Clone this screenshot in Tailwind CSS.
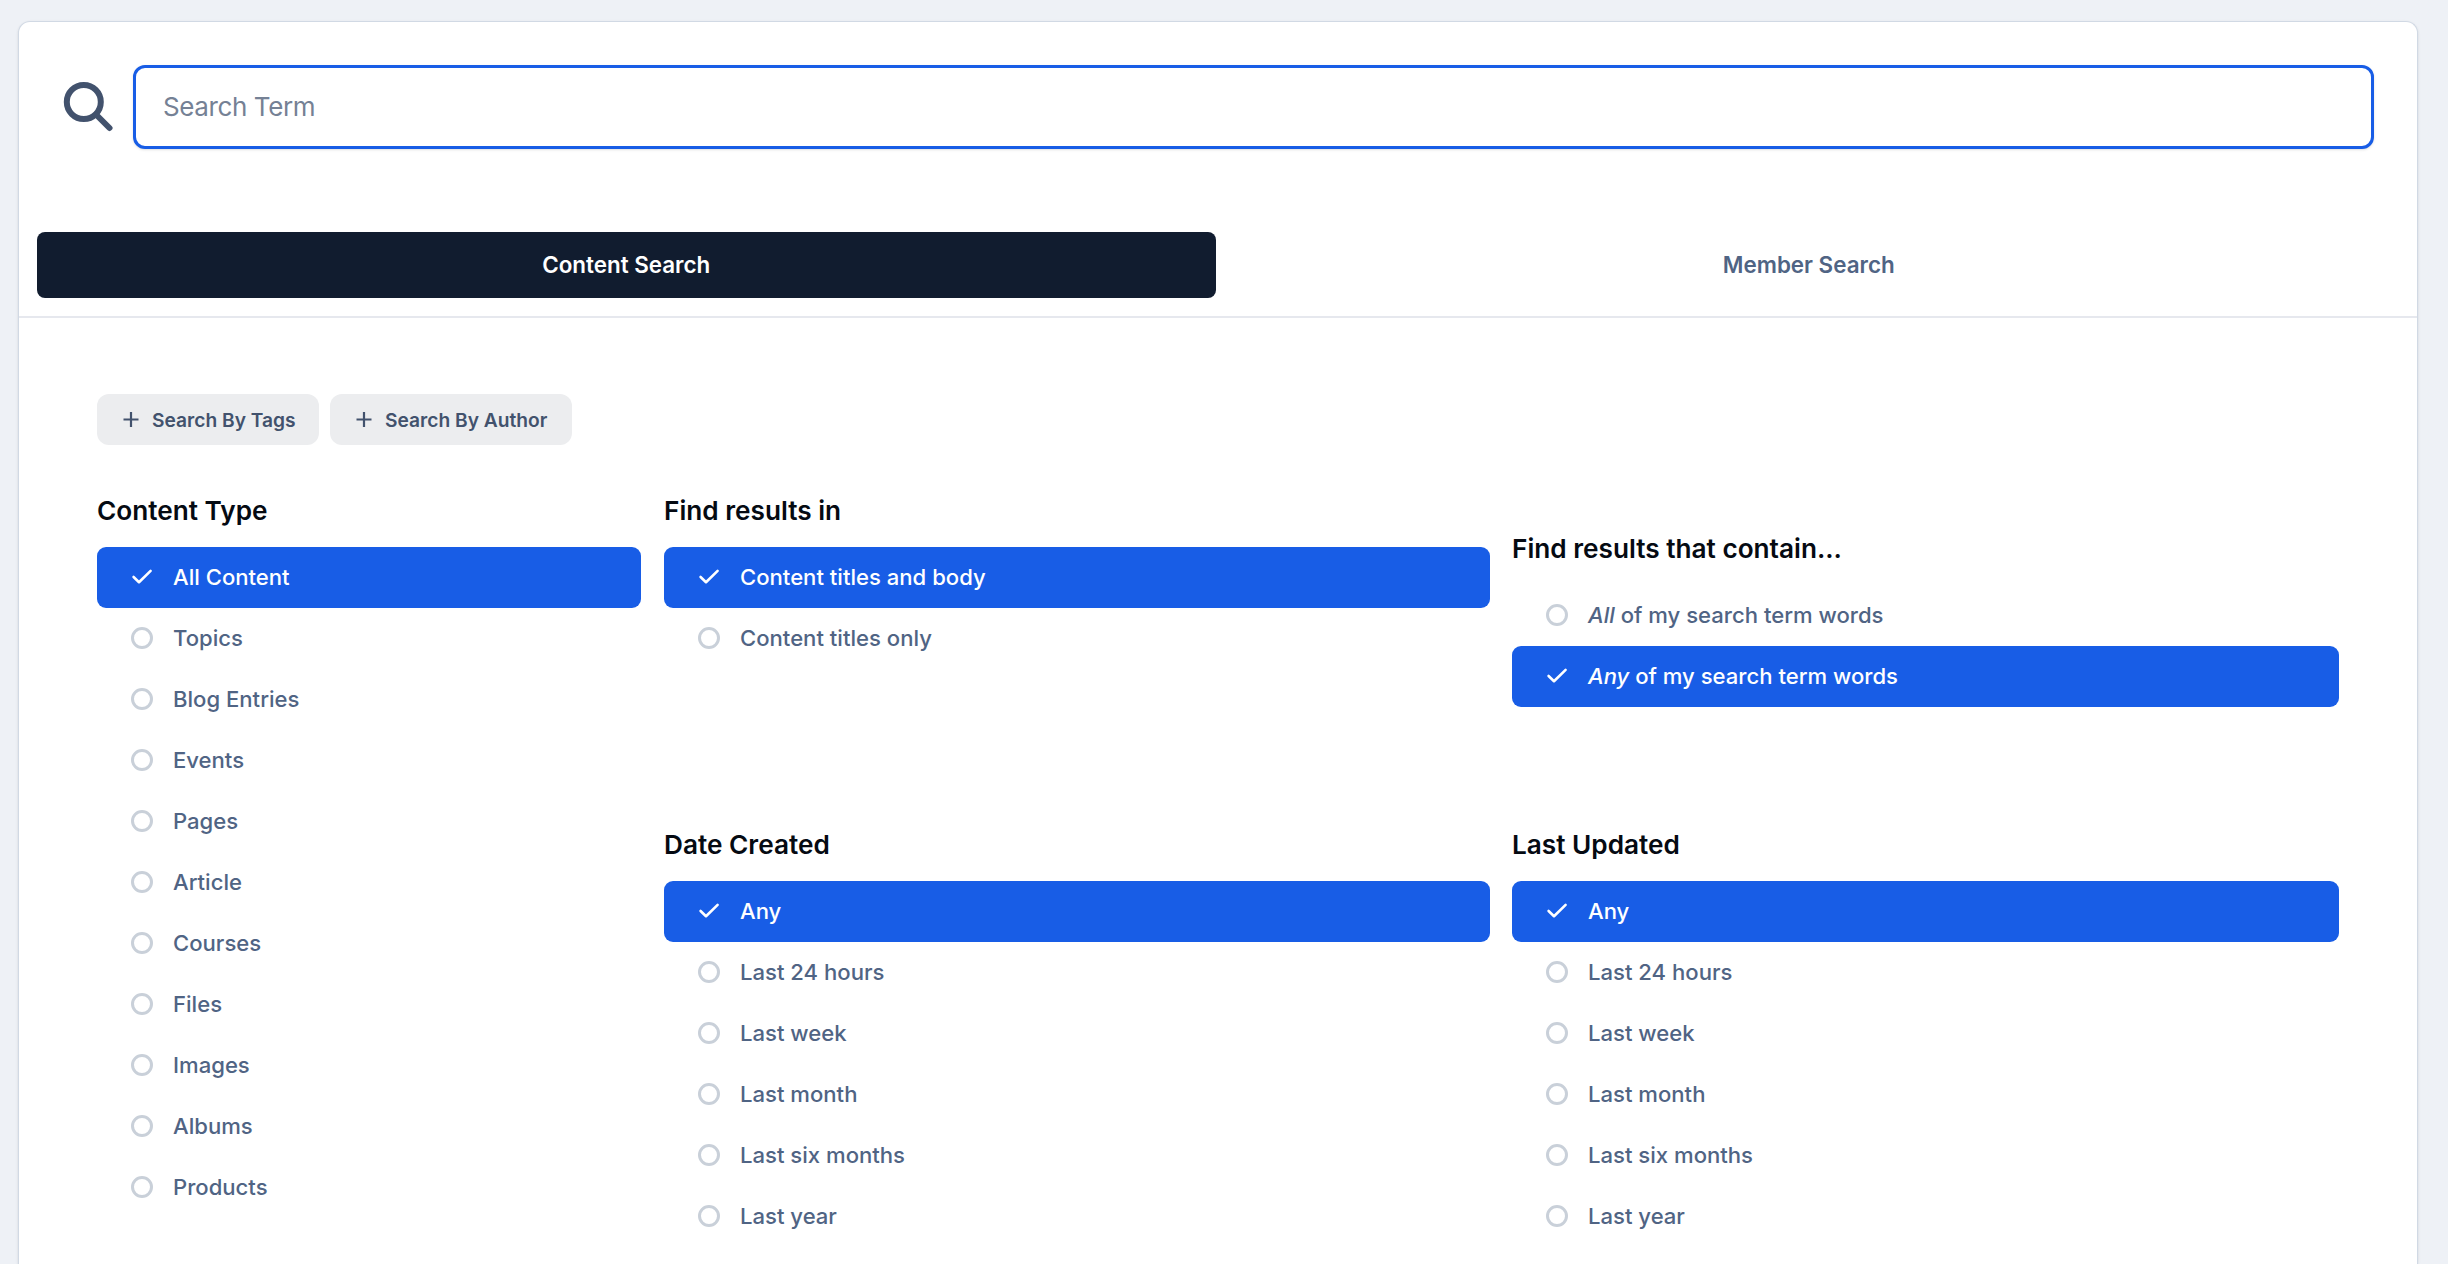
<!DOCTYPE html>
<html lang="en">
<head>
  <meta charset="UTF-8">
  <meta name="viewport" content="width=device-width, initial-scale=1.0">
  <title>Search</title>
  <script src="https://cdn.jsdelivr.net/npm/@tailwindcss/browser@4"></script>
</head>
<body class="h-screen overflow-hidden bg-[#eef1f6] pt-[21px] pl-[18px] pr-[30px] font-['Inter',sans-serif] antialiased">
  <main class="h-full bg-white border border-b-0 border-[#d1d9e4] rounded-t-xl shadow-sm">

    <!-- Search box -->
    <form class="flex items-center h-[84px] mt-[43px] ml-[44px] mr-[43px]" onsubmit="return false">
      <svg class="w-[50px] h-[50px] shrink-0 mr-[20px]" viewBox="0 0 50 50" fill="none" stroke="#42526d">
        <circle cx="20.8" cy="20" r="17" stroke-width="6"/>
        <path d="M33 32.5l13.5 13.5" stroke-width="6" stroke-linecap="round"/>
      </svg>
      <input type="text" placeholder="Search Term"
        class="grow h-[84px] pl-[27px] pr-7 pb-0.5 text-[26px] tracking-[-0.4px] bg-white border-3 border-[#185de6] rounded-xl shadow-sm outline-none placeholder:text-[#758195]">
    </form>

    <!-- Tabs -->
    <nav class="grid grid-cols-2 gap-1.5 mt-[83px] h-[86px] pl-[18px] pr-[17px] border-b-2 border-[#e6e8ee]">
      <button class="h-[66px] rounded-lg bg-[#111c2f] text-white text-[22.4px] font-semibold">Content Search</button>
      <button class="h-[66px] pr-1 rounded-lg text-[#506484] text-[22.4px] font-semibold">Member Search</button>
    </nav>

    <section class="pt-[76px] pl-[78px] pr-[78px]">
      <div class="flex gap-[11px]">
        <button class="flex items-center h-[51px] w-[222px] pl-[26px] rounded-xl bg-[#ecedef] text-[#42526d] text-[19.2px] font-semibold whitespace-nowrap">
          <svg class="w-4 h-4 mr-[13px] shrink-0" viewBox="0 0 16 16" stroke="currentColor" stroke-width="2.2"><path d="M8 0v15M0.5 7.5h15"/></svg>
          <span class="pt-0.5">Search By Tags</span>
        </button>
        <button class="flex items-center h-[51px] w-[242px] pl-[26px] rounded-xl bg-[#ecedef] text-[#42526d] text-[19.2px] font-semibold whitespace-nowrap">
          <svg class="w-4 h-4 mr-[13px] shrink-0" viewBox="0 0 16 16" stroke="currentColor" stroke-width="2.2"><path d="M8 0v15M0.5 7.5h15"/></svg>
          <span class="pt-0.5">Search By Author</span>
        </button>
      </div>

      <!-- Filters -->
      <div class="flex mt-[46px]">
        <div class="w-[544px] mr-[23px]">
          <h3 class="h-[56px] text-[26.2px] leading-[40px] font-semibold text-[#050a12]">Content Type</h3>
          <ul data-list="type"></ul>
        </div>
        <div class="w-[826px] mr-[22px]">
          <div class="h-[334px]">
            <h3 class="h-[56px] text-[26.2px] leading-[40px] font-semibold text-[#050a12]">Find results in</h3>
            <ul data-list="where"></ul>
          </div>
          <h3 class="h-[56px] text-[26.2px] leading-[40px] font-semibold text-[#050a12]">Date Created</h3>
          <ul data-list="created"></ul>
        </div>
        <div class="w-[827px]">
          <div class="h-[334px] pt-[38px]">
            <h3 class="h-[56px] text-[26.2px] leading-[40px] font-semibold text-[#050a12]">Find results that contain...</h3>
            <ul data-list="words"></ul>
          </div>
          <h3 class="h-[56px] text-[26.2px] leading-[40px] font-semibold text-[#050a12]">Last Updated</h3>
          <ul data-list="updated"></ul>
        </div>
      </div>
    </section>
  </main>

  <script>
    const dates = ['Any', 'Last 24 hours', 'Last week', 'Last month', 'Last six months', 'Last year'];
    const lists = {
      type: { selected: 0, items: ['All Content', 'Topics', 'Blog Entries', 'Events', 'Pages', 'Article', 'Courses', 'Files', 'Images', 'Albums', 'Products'] },
      where: { selected: 0, items: ['Content titles and body', 'Content titles only'] },
      words: { selected: 1, items: ['<em>All</em> of my search term words', '<em>Any</em> of my search term words'] },
      created: { selected: 0, items: dates },
      updated: { selected: 0, items: dates },
    };

    const check = '<svg class="w-[22px] h-[22px] mr-[20px]" viewBox="0 0 22 22" fill="none" stroke="currentColor" stroke-width="2.6" stroke-linecap="round" stroke-linejoin="round"><path d="M2.6 11l5.4 5.2L19.6 4.9"/></svg>';
    const circle = '<span class="w-[22px] h-[22px] mr-[20px] rounded-full border-3 border-[#c9d0d9]"></span>';

    function renderList(name) {
      const { selected, items } = lists[name];
      const ul = document.querySelector(`[data-list="${name}"]`);
      ul.innerHTML = items.map((label, i) => i === selected
        ? `<li class="flex items-center h-[60.95px] pl-[34px] rounded-[9px] bg-[#185de6] text-white text-[22.1px] font-medium">${check}<span class="pt-px">${label}</span></li>`
        : `<li class="flex items-center h-[60.95px] pl-[34px] text-[#506484] text-[22.1px] font-medium cursor-pointer" onclick="choose('${name}', ${i})">${circle}<span class="pt-px">${label}</span></li>`
      ).join('');
    }

    function choose(name, index) {
      lists[name].selected = index;
      renderList(name);
    }

    Object.keys(lists).forEach(renderList);
  </script>
</body>
</html>
